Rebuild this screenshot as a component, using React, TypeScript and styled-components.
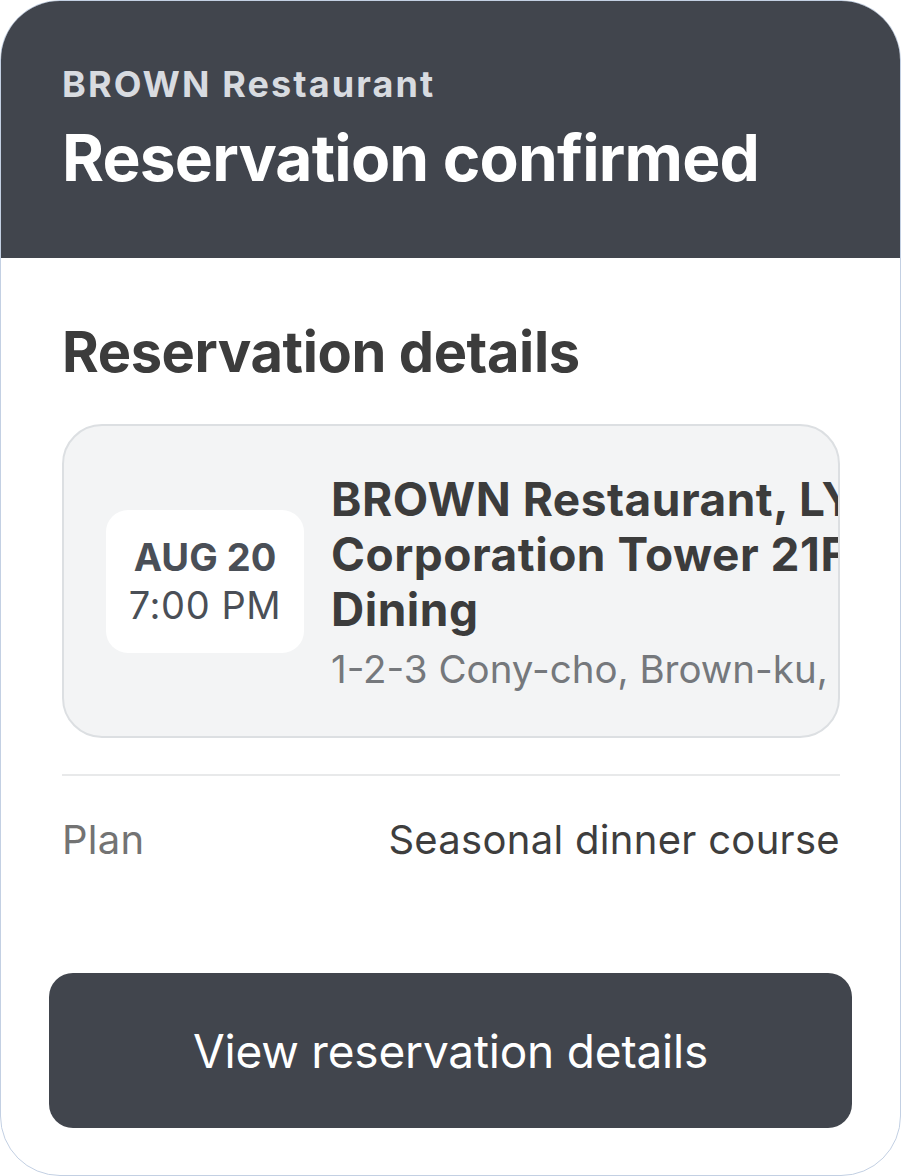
import React from "react";
import styled, { createGlobalStyle } from "styled-components";

const GlobalStyle = createGlobalStyle`
  html, body {
    margin: 0;
    padding: 0;
    background: #ffffff;
  }
  * {
    box-sizing: border-box;
  }
`;

const Card = styled.div`
  width: 901px;
  height: 1176px;
  display: flex;
  flex-direction: column;
  background: #ffffff;
  border: 1px solid #c3d0e3;
  border-radius: 60px;
  overflow: hidden;
  font-family: Inter, "Noto Sans", sans-serif;
`;

const Header = styled.div`
  background: #41454d;
  padding: 61px 61px 64px;
  display: flex;
  flex-direction: column;
  gap: 16px;
`;

const Brand = styled.div`
  font-size: 36px;
  line-height: 44px;
  font-weight: 700;
  color: #d8dbe0;
  letter-spacing: 2.1px;
`;

const Title = styled.div`
  font-size: 64px;
  line-height: 72px;
  font-weight: 700;
  color: #ffffff;
  letter-spacing: -0.8px;
`;

const Body = styled.div`
  padding: 62px 60px 0 61px;
  display: flex;
  flex-direction: column;
`;

const SectionTitle = styled.div`
  font-size: 56px;
  line-height: 64px;
  font-weight: 700;
  color: #3c3c3c;
  letter-spacing: -0.4px;
`;

const InfoBox = styled.div`
  margin-top: 40px;
  height: 314px;
  background: #f3f4f5;
  border: 2px solid #dcdfe2;
  border-radius: 40px;
  padding: 0 0 0 42px;
  display: flex;
  align-items: center;
  gap: 27px;
  overflow: hidden;
`;

const DateChip = styled.div`
  flex: 0 0 198px;
  height: 143px;
  background: #ffffff;
  border-radius: 22px;
  display: flex;
  flex-direction: column;
  align-items: center;
  justify-content: center;
  color: #4a4f57;
`;

const DateText = styled.div<{ bold?: boolean }>`
  font-size: 38px;
  line-height: 48px;
  font-weight: ${(p) => (p.bold ? 700 : 400)};
  letter-spacing: ${(p) => (p.bold ? "0" : "0.6px")};
`;

const Place = styled.div`
  display: flex;
  flex-direction: column;
  white-space: nowrap;
`;

const PlaceLine = styled.div`
  font-size: 46px;
  line-height: 55px;
  font-weight: 700;
  color: #3c3c3c;
  letter-spacing: 0.5px;
`;

const Address = styled.div`
  margin-top: 10px;
  font-size: 38.5px;
  line-height: 44px;
  color: #75787c;
`;

const Divider = styled.div`
  margin-top: 36px;
  height: 2px;
  background: #e8e9ea;
`;

const Row = styled.div`
  margin-top: 40px;
  display: flex;
  justify-content: space-between;
  font-size: 40px;
  line-height: 48px;
  letter-spacing: 0.3px;
`;

const Label = styled.span`
  color: #737373;
`;

const Value = styled.span`
  color: #3e3e3e;
`;

const Footer = styled.div`
  margin-top: auto;
  padding: 0 48px 47px;
`;

const Button = styled.button`
  width: 100%;
  height: 155px;
  border: none;
  border-radius: 24px;
  background: #41454d;
  color: #ffffff;
  font-family: Inter, "Noto Sans", sans-serif;
  font-size: 46px;
  font-weight: 400;
  letter-spacing: -0.2px;
  cursor: pointer;
`;

export default function App() {
  return (
    <>
      <GlobalStyle />
      <Card>
        <Header>
          <Brand>BROWN Restaurant</Brand>
          <Title>Reservation confirmed</Title>
        </Header>
        <Body>
          <SectionTitle>Reservation details</SectionTitle>
          <InfoBox>
            <DateChip>
              <DateText bold>AUG 20</DateText>
              <DateText>7:00 PM</DateText>
            </DateChip>
            <Place>
              <PlaceLine>BROWN Restaurant, LY</PlaceLine>
              <PlaceLine>Corporation Tower 21F</PlaceLine>
              <PlaceLine>Dining</PlaceLine>
              <Address>1-2-3 Cony-cho, Brown-ku, Tokyo</Address>
            </Place>
          </InfoBox>
          <Divider />
          <Row>
            <Label>Plan</Label>
            <Value>Seasonal dinner course</Value>
          </Row>
        </Body>
        <Footer>
          <Button>View reservation details</Button>
        </Footer>
      </Card>
    </>
  );
}
